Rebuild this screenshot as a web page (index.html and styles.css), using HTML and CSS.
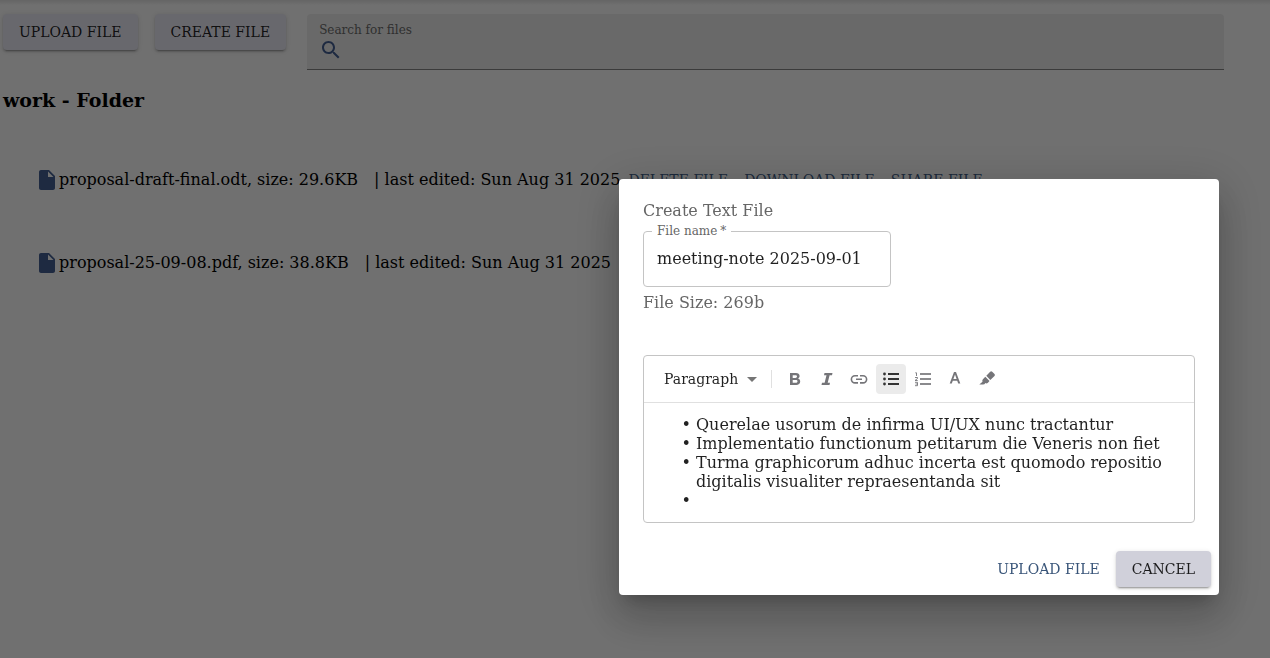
FILE: index.html
```html
<!DOCTYPE html>
<html lang="en">
<head>
<meta charset="utf-8">
<title>work - Folder</title>
<link rel="stylesheet" href="styles.css">
</head>
<body>
<main class="page">
  <div class="toolbar">
    <button class="btn btn-raised" type="button">Upload file</button>
    <button class="btn btn-raised" type="button">Create file</button>
    <div class="search">
      <label class="search-label" for="search">Search for files</label>
      <div class="search-row">
        <svg class="icon" viewBox="0 0 24 24" aria-hidden="true"><path d="M15.5 14h-.79l-.28-.27C15.41 12.59 16 11.11 16 9.5 16 5.91 13.09 3 9.5 3S3 5.91 3 9.5 5.91 16 9.5 16c1.61 0 3.09-.59 4.23-1.57l.27.28v.79l5 4.99L20.49 19l-4.99-5zm-6 0C7.01 14 5 11.99 5 9.5S7.01 5 9.5 5 14 7.01 14 9.5 11.99 14 9.5 14z"/></svg>
        <input class="search-input" id="search" type="text">
      </div>
    </div>
  </div>
  <h3 class="folder-title">work - Folder</h3>
  <ul class="files">
    <li class="file">
      <svg class="icon" viewBox="0 0 24 24" aria-hidden="true"><path d="M6 2c-1.100 0-2 .9-2 2v16c0 1.100.9 2 2 2h12c1.100 0 2-.9 2-2V8l-6-6H6zm7 7V3.500L18.500 9H13z"/></svg>
      <span class="file-name">proposal-draft-final.odt, size: 29.6KB</span>
      <span>| last edited: Sun Aug 31 2025</span>
      <div class="file-actions">
        <button class="btn btn-text" type="button">Delete file</button>
        <button class="btn btn-text" type="button">Download file</button>
        <button class="btn btn-text" type="button">Share file</button>
      </div>
    </li>
    <li class="file">
      <svg class="icon" viewBox="0 0 24 24" aria-hidden="true"><path d="M6 2c-1.100 0-2 .9-2 2v16c0 1.100.9 2 2 2h12c1.100 0 2-.9 2-2V8l-6-6H6zm7 7V3.500L18.500 9H13z"/></svg>
      <span class="file-name">proposal-25-09-08.pdf, size: 38.8KB</span>
      <span>| last edited: Sun Aug 31 2025</span>
    </li>
  </ul>
</main>
<div class="overlay">
  <form class="dialog" role="dialog" aria-labelledby="dialog-title">
    <div class="dialog-content">
      <p class="dialog-text" id="dialog-title">Create Text File</p>
      <div class="field">
        <label class="field-label" for="file-name">File name<span class="required">*</span></label>
        <input class="field-input" id="file-name" type="text" value="meeting-note 2025-09-01">
      </div>
      <p class="dialog-text size-text">File Size: 269b</p>
      <div class="editor">
        <div class="editor-tools">
          <button class="format" type="button">Paragraph<svg class="caret" viewBox="0 0 10 5" aria-hidden="true"><path d="M0 0h10L5 5z"/></svg></button>
          <span class="divider"></span>
          <div class="tools">
            <button class="tool" type="button" aria-label="Bold"><svg viewBox="0 0 20 20" aria-hidden="true"><path fill-rule="evenodd" d="M5 4h6c2.200 0 3.600 1.200 3.600 3.100 0 1.200-.6 2.100-1.500 2.500 1.300.4 2.100 1.500 2.100 2.900 0 2.200-1.600 3.500-4 3.500H5zm2.700 2.200v2.700h2.700c1 0 1.600-.5 1.600-1.400 0-.8-.6-1.300-1.600-1.300zm0 4.700v2.900h3c1.100 0 1.800-.5 1.800-1.500 0-.9-.7-1.400-1.800-1.400z"/></svg></button>
            <button class="tool" type="button" aria-label="Italic"><svg viewBox="0 0 20 20" aria-hidden="true"><path d="M7.500 4h8l-.5 2.300h-2.400L10.700 13.700H13l-.5 2.300h-8l.5-2.300h2.600L9.500 6.300H7z"/></svg></button>
            <button class="tool" type="button" aria-label="Link"><svg viewBox="0 0 20 20" aria-hidden="true"><path fill="none" stroke="currentColor" stroke-width="1.600" d="M9 6.700H6a3.600 3.600 0 0 0 0 7.200h3M11 6.700h3a3.600 3.600 0 0 1 0 7.200h-3M7 10.300h6"/></svg></button>
            <button class="tool tool-active" type="button" aria-label="Bulleted list" aria-pressed="true"><svg viewBox="0 0 20 20" aria-hidden="true"><path d="M7 4h11v2H7zM7 9h11v2H7zM7 14h11v2H7z"/><circle cx="3.500" cy="5" r="1.400"/><circle cx="3.500" cy="10" r="1.400"/><circle cx="3.500" cy="15" r="1.400"/></svg></button>
            <button class="tool" type="button" aria-label="Numbered list"><svg viewBox="0 0 20 20" aria-hidden="true"><path opacity=".85" d="M7 4h11v2H7zM7 9h11v2H7zM7 14h11v2H7z"/><path fill="none" stroke="currentColor" stroke-width=".9" d="M2.300 3.800h1.200V7M2 8.500h2.500v1L2 11.500h2.700M2 13.300h2.500v3.400H2M2.500 15h2"/></svg></button>
            <button class="tool" type="button" aria-label="Text color"><svg viewBox="0 0 20 20" aria-hidden="true"><path fill-rule="evenodd" d="M9 3h2l4.300 11.500h-2.100l-1-2.800H7.800l-1 2.800H4.700zm1 2.600L8.400 10h3.200z"/></svg></button>
            <button class="tool" type="button" aria-label="Highlight"><svg viewBox="0 0 20 20" aria-hidden="true"><path d="M9.300 6.800 13.200 2.700q1-.9 2 0l2.300 2.300q.9 1 0 2L13.300 11zM8.300 7.700l4.200 4.200-1.800 2.100q-1.200.9-2.300.1-.8 1.500-2.400 1.500H2.300L5.500 12.700q-.6-1.300.4-2.400z"/></svg></button>
          </div>
        </div>
        <div class="editor-body" contenteditable="true" spellcheck="false" role="textbox" aria-label="File content">
          <ul class="notes">
            <li>Querelae usorum de infirma UI/UX nunc tractantur</li>
            <li>Implementatio functionum petitarum die Veneris non fiet</li>
            <li>Turma graphicorum adhuc incerta est quomodo repositio digitalis visualiter repraesentanda sit</li>
            <li><br></li>
          </ul>
        </div>
      </div>
    </div>
    <div class="dialog-actions">
      <button class="btn btn-text" type="button">Upload file</button>
      <button class="btn btn-raised" type="button">Cancel</button>
    </div>
  </form>
</div>
</body>
</html>
```
FILE: styles.css
```css
* { box-sizing: border-box; }

body {
  margin: 0;
  background: #e0e0e0;
  color: #000;
  font: 16px/19px "DejaVu Serif", serif;
}

button, input { font-family: inherit; }

.page {
  min-height: 100vh;
  padding: 14px 46px 0 3px;
  background: linear-gradient(#cacaca, #e0e0e0 5px);
}

.toolbar {
  display: flex;
  align-items: flex-start;
  gap: 17px;
}

.btn {
  border: 0;
  border-radius: 4px;
  font-size: 14px;
  line-height: 24px;
  text-transform: uppercase;
  white-space: nowrap;
}

.btn-raised {
  padding: 6px 16px;
  background: #d0d0da;
  color: rgba(0, 0, 0, .87);
  box-shadow: 0 3px 1px -2px rgba(0, 0, 0, .2), 0 2px 2px rgba(0, 0, 0, .14), 0 1px 5px rgba(0, 0, 0, .12);
}

.btn-text {
  padding: 6px 8px;
  background: transparent;
  color: #385478;
}

.icon {
  flex: none;
  width: 24px;
  height: 24px;
  fill: #3c5482;
}

.search {
  flex: 1;
  height: 56px;
  margin-left: 4px;
  padding: 8px 12px 0;
  border-bottom: 1px solid #767676;
  border-radius: 4px 4px 0 0;
  background: #d3d3d3;
}

.search-label {
  display: block;
  color: #606060;
  font-size: 12px;
  line-height: 16px;
}

.search-row { display: flex; }

.search-input {
  flex: 1;
  border: 0;
  background: transparent;
  font-size: 16px;
}

.folder-title {
  margin: 19px 0 27px;
  font-size: 19px;
  line-height: 22px;
}

.files {
  margin: 0;
  padding: 0 0 0 32px;
  list-style: none;
}

.file {
  display: flex;
  align-items: center;
  height: 83px;
}

.file-name { margin-right: 16px; }

.file-actions { display: flex; }

.overlay {
  position: fixed;
  inset: 0;
  display: flex;
  align-items: flex-end;
  justify-content: flex-end;
  padding: 0 51px 63px;
  background: rgba(0, 0, 0, .5);
}

.dialog {
  width: 100%;
  max-width: 600px;
  border-radius: 4px;
  background: #fff;
  box-shadow: 0 11px 15px -7px rgba(0, 0, 0, .2), 0 24px 38px 3px rgba(0, 0, 0, .14), 0 9px 46px 8px rgba(0, 0, 0, .12);
}

.dialog-content { padding: 20px 24px; }

.dialog-text {
  margin: 0;
  color: #666;
  line-height: 24px;
}

.field {
  position: relative;
  width: 248px;
  margin: 8px 0 4px;
}

.field-label {
  position: absolute;
  top: -8px;
  left: 9px;
  padding: 0 5px;
  background: #fff;
  color: #666;
  font-size: 12px;
  line-height: 16px;
}

.required { margin-left: 3px; }

.field-input {
  display: block;
  width: 100%;
  height: 56px;
  padding: 0 13px 2px;
  border: 1px solid #c4c4c4;
  border-radius: 4px;
  color: rgba(0, 0, 0, .87);
  font-size: 16px;
}

.size-text { margin-bottom: 40px; }

.editor {
  border: 1px solid #c4c4c4;
  border-radius: 4px;
  color: rgba(0, 0, 0, .87);
}

.editor-tools {
  display: flex;
  align-items: center;
  padding: 8px 20px;
  border-bottom: 1px solid #e0e0e0;
}

.format {
  display: flex;
  align-items: center;
  gap: 9px;
  padding: 0;
  border: 0;
  background: transparent;
  color: rgba(0, 0, 0, .87);
  font-size: 14px;
  line-height: 20px;
}

.caret {
  width: 10px;
  height: 5px;
  fill: #757575;
}

.divider {
  height: 18px;
  margin: 0 8px 0 14px;
  border-left: 1px solid #e0e0e0;
}

.tools {
  display: flex;
  gap: 2px;
}

.tool {
  display: grid;
  place-items: center;
  width: 30px;
  height: 30px;
  padding: 0;
  border: 0;
  border-radius: 4px;
  background: transparent;
  color: #757579;
}

.tool svg {
  width: 20px;
  height: 20px;
  fill: currentColor;
}

.tool-active {
  background: #ebebeb;
  color: #333;
}

.editor-body {
  padding: 12px;
  outline: none;
}

.notes {
  margin: 0;
  padding-left: 40px;
  list-style-type: "• ";
}

.dialog-actions {
  display: flex;
  justify-content: flex-end;
  gap: 8px;
  padding: 8px;
}
```
